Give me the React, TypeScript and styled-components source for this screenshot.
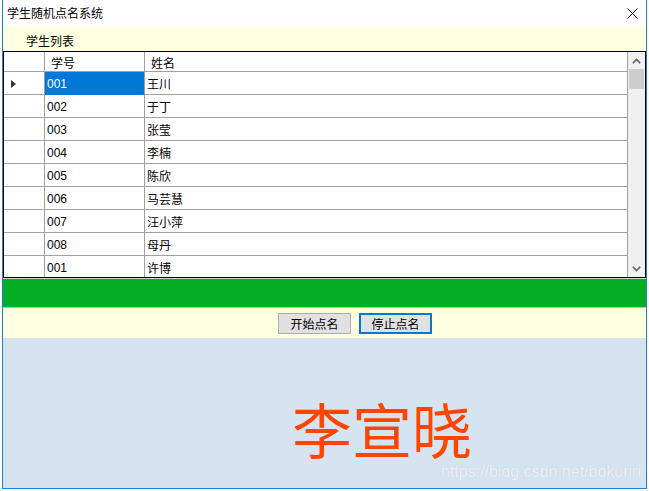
import React from 'react';
import styled, { createGlobalStyle } from 'styled-components';

const students = [
  { id: '001', name: '王川' },
  { id: '002', name: '于丁' },
  { id: '003', name: '张莹' },
  { id: '004', name: '李楠' },
  { id: '005', name: '陈欣' },
  { id: '006', name: '马芸慧' },
  { id: '007', name: '汪小萍' },
  { id: '008', name: '母丹' },
  { id: '001', name: '许博' },
];

const GlobalStyle = createGlobalStyle`
  html, body {
    margin: 0;
    padding: 0;
    background: #ffffff;
  }
  body {
    font-family: 'Liberation Sans', 'Noto Sans CJK SC', sans-serif;
    font-size: 12px;
    color: #000;
  }
`;

const App = () => {
  return (
    <>
      <GlobalStyle />
      <Window>
        <TitleBar>
          <Title>学生随机点名系统</Title>
          <CloseButton>
            <svg width='11' height='11' viewBox='0 0 11 11'>
              <path d='M0.5 0.5 L10.5 10.5 M10.5 0.5 L0.5 10.5' stroke='#000' strokeWidth='1' />
            </svg>
          </CloseButton>
        </TitleBar>
        <LabelBar>学生列表</LabelBar>
        <GridFrame>
          <Table>
            <Row $height={20}>
              <HeaderCell />
              <HeaderCell $pad={6}>学号</HeaderCell>
              <HeaderCell $pad={6}>姓名</HeaderCell>
            </Row>
            {students.map((s, i) => (
              <Row key={i} $height={23}>
                <RowHeader>{i === 0 && <Marker />}</RowHeader>
                <Cell $selected={i === 0}>{s.id}</Cell>
                <Cell>{s.name}</Cell>
              </Row>
            ))}
          </Table>
          <ScrollBar>
            <ScrollArrow>
              <svg width='9' height='6' viewBox='0 0 9 6'>
                <path d='M0.8 5.2 L4.5 1.5 L8.2 5.2' fill='none' stroke='#606060' strokeWidth='1.6' />
              </svg>
            </ScrollArrow>
            <Thumb />
            <ScrollSpacer />
            <ScrollArrow>
              <svg width='9' height='6' viewBox='0 0 9 6'>
                <path d='M0.8 0.8 L4.5 4.5 L8.2 0.8' fill='none' stroke='#606060' strokeWidth='1.6' />
              </svg>
            </ScrollArrow>
          </ScrollBar>
        </GridFrame>
        <GreenBar />
        <ButtonBar>
          <Button>开始点名</Button>
          <Button $focused>停止点名</Button>
        </ButtonBar>
        <NamePanel>
          <PickedName>李宣晓</PickedName>
          <Watermark>https://blog.csdn.net/bokuriri</Watermark>
        </NamePanel>
      </Window>
    </>
  );
};

const Window = styled.div`
  position: relative;
  margin-left: 2px;
  width: 643px;
  height: 488px;
  border: 1px solid #1883d7;
  border-top: none;
  display: flex;
  flex-direction: column;
  background: #ffffff;
`;

const TitleBar = styled.div`
  height: 26px;
  flex-shrink: 0;
  display: flex;
  align-items: center;
  justify-content: space-between;
  background: #ffffff;
  padding: 0 8px 0 4px;
`;

const Title = styled.span`
  font-family: 'Noto Sans CJK SC', sans-serif;
  font-size: 12px;
  line-height: 1;
  margin-top: -1px;
`;

const CloseButton = styled.div`
  display: flex;
  align-items: center;
  justify-content: center;
  width: 11px;
  height: 11px;
  margin-top: 1px;
`;

const LabelBar = styled.div`
  height: 25px;
  flex-shrink: 0;
  background: #ffffe1;
  display: flex;
  align-items: center;
  padding-left: 23px;
  padding-top: 4px;
  box-sizing: border-box;
  font-family: 'Noto Sans CJK SC', sans-serif;
  font-size: 12px;
`;

const GridFrame = styled.div`
  height: 227px;
  flex-shrink: 0;
  box-sizing: border-box;
  border: 1px solid #000;
  display: flex;
  background: #ffffff;
`;

const Table = styled.div`
  width: 624px;
  overflow: hidden;
  display: flex;
  flex-direction: column;
`;

const Row = styled.div<{ $height: number }>`
  display: grid;
  grid-template-columns: 41px 100px 483px;
  height: ${({ $height }) => $height}px;
  flex-shrink: 0;
`;

const BaseCell = styled.div`
  box-sizing: border-box;
  border-right: 1px solid #a0a0a0;
  border-bottom: 1px solid #a0a0a0;
  display: flex;
  align-items: center;
  font-family: 'Liberation Sans', 'Noto Sans CJK SC', sans-serif;
  font-size: 12px;
  white-space: nowrap;
`;

const HeaderCell = styled(BaseCell)<{ $pad?: number }>`
  padding-left: ${({ $pad }) => $pad ?? 0}px;
  padding-top: 2px;
  font-family: 'Noto Sans CJK SC', sans-serif;
`;

const RowHeader = styled(BaseCell)`
  padding-left: 7px;
`;

const Marker = styled.div`
  width: 0;
  height: 0;
  border-top: 4px solid transparent;
  border-bottom: 4px solid transparent;
  border-left: 5px solid #333;
  margin-top: 1px;
`;

const Cell = styled(BaseCell)<{ $selected?: boolean }>`
  padding-left: 2px;
  padding-top: 1px;
  background: ${({ $selected }) => ($selected ? '#0078d7' : '#ffffff')};
  color: ${({ $selected }) => ($selected ? '#ffffff' : '#000000')};
  ${({ $selected }) => $selected && 'border-bottom-color: #0078d7;'}
`;

const ScrollBar = styled.div`
  width: 17px;
  background: #f0f0f0;
  display: flex;
  flex-direction: column;
  align-items: center;
`;

const ScrollArrow = styled.div`
  height: 17px;
  width: 17px;
  display: flex;
  align-items: center;
  justify-content: center;
`;

const Thumb = styled.div`
  width: 15px;
  height: 20px;
  background: #cdcdcd;
`;

const ScrollSpacer = styled.div`
  flex: 1;
`;

const GreenBar = styled.div`
  height: 30px;
  flex-shrink: 0;
  box-sizing: border-box;
  background: #05ae27;
  border-top: 1px solid #c8d8c8;
  border-bottom: 1px solid #b4c8b4;
`;

const ButtonBar = styled.div`
  height: 30px;
  flex-shrink: 0;
  background: #ffffe1;
  display: flex;
  align-items: flex-start;
  justify-content: center;
  gap: 8px;
  padding-top: 5px;
  padding-left: 61px;
  box-sizing: border-box;
`;

const Button = styled.div<{ $focused?: boolean }>`
  width: 73px;
  height: 21px;
  box-sizing: border-box;
  background: #e1e1e1;
  border: ${({ $focused }) => ($focused ? '2px solid #0078d7' : '1px solid #adadad')};
  display: flex;
  align-items: center;
  justify-content: center;
  font-family: 'Noto Sans CJK SC', sans-serif;
  font-size: 12px;
  color: #000;
`;

const NamePanel = styled.div`
  position: relative;
  flex: 1;
  background: #d6e4f2;
  padding: 60px 0 0 289px;
  box-sizing: border-box;
`;

const PickedName = styled.div`
  font-family: 'Noto Sans CJK SC', sans-serif;
  font-size: 60px;
  line-height: 60px;
  color: #ff4500;
  white-space: nowrap;
`;

const Watermark = styled.div`
  position: absolute;
  right: 5px;
  bottom: 7px;
  font-family: 'Liberation Sans', sans-serif;
  font-size: 16px;
  color: rgba(255, 255, 255, 0.7);
  text-shadow: 0 0 1px rgba(160, 170, 180, 0.5);
`;

export default App;
